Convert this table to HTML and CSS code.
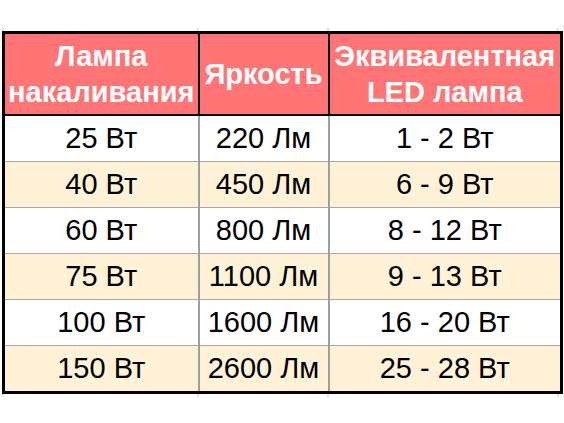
FILE: index.html
```html
<!DOCTYPE html>
<html>
<head>
<meta charset="utf-8">
<link rel="stylesheet" href="styles.css">
</head>
<body>
<div class="stubs"><span></span><span></span><span></span><span></span></div>
<table class="lamps">
  <colgroup><col class="c1"><col class="c2"><col class="c3"></colgroup>
  <thead>
    <tr><th>Лампа<br>накаливания</th><th>Яркость</th><th>Эквивалентная<br>LED лампа</th></tr>
  </thead>
  <tbody>
    <tr><td>25 Вт</td><td>220 Лм</td><td>1 - 2 Вт</td></tr>
    <tr class="alt"><td>40 Вт</td><td>450 Лм</td><td>6 - 9 Вт</td></tr>
    <tr><td>60 Вт</td><td>800 Лм</td><td>8 - 12 Вт</td></tr>
    <tr class="alt"><td>75 Вт</td><td>1100 Лм</td><td>9 - 13 Вт</td></tr>
    <tr><td>100 Вт</td><td>1600 Лм</td><td>16 - 20 Вт</td></tr>
    <tr class="alt"><td>150 Вт</td><td>2600 Лм</td><td>25 - 28 Вт</td></tr>
  </tbody>
</table>
<div class="stubs"><span></span><span></span><span></span><span></span></div>
</body>
</html>
```
FILE: styles.css
```css
html, body {
  margin: 0;
  padding: 0;
  background: #ffffff;
}
body {
  padding-top: 28px;
  font-family: "Liberation Sans", Arial, sans-serif;
}
.stubs {
  position: relative;
  height: 3px;
  width: 564px;
}
.stubs span {
  position: absolute;
  top: 0;
  width: 2px;
  height: 3px;
  background: #e2e2e2;
}
.stubs span:nth-child(1) { left: 2px; }
.stubs span:nth-child(2) { left: 197px; }
.stubs span:nth-child(3) { left: 327px; }
.stubs span:nth-child(4) { left: 557px; }
.lamps {
  margin-left: 2px;
  width: 558px;
  border-collapse: collapse;
  border: 3px solid #000;
  table-layout: fixed;
}
.c1 { width: 195px; }
.c2 { width: 130px; }
.c3 { width: 233px; }
.lamps th {
  background: #ff7575;
  color: #fff;
  font-weight: bold;
  font-size: 29px;
  line-height: 36px;
  height: 80px;
  padding: 0;
  border: 2px solid #000;
  text-align: center;
  vertical-align: middle;
  white-space: nowrap;
}
.lamps td {
  font-size: 29px;
  height: 45px;
  padding: 0;
  text-align: center;
  vertical-align: middle;
  color: #000;
  border-left: 2px solid #9e9e9e;
  border-right: 2px solid #9e9e9e;
  border-top: 1px solid #a8a8a8;
}
.lamps tbody tr:first-child td { border-top: 2px solid #000; }
.lamps td:first-child { border-left: 3px solid #000; }
.lamps td:last-child { border-right: 3px solid #000; }
.lamps tr.alt td { background: #fff2d6; }
```
